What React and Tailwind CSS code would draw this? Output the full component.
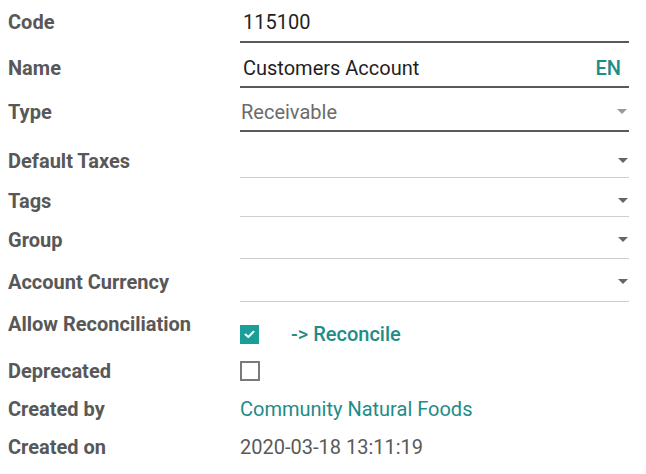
import React from "react";

const font = { fontFamily: "Roboto, 'Open Sans', sans-serif" };

function Caret({ light }) {
  return (
    <svg width="10" height="6" viewBox="0 0 10 6" className="shrink-0">
      <path d="M0 0 L10 0 L5 5 Z" fill={light ? "#9a9a9a" : "#666666"} />
    </svg>
  );
}

function Label({ children, pt }) {
  return (
    <div className={`w-[240px] shrink-0 pl-[8px] font-bold text-[20px] leading-[24px] text-[#585858] ${pt}`}>
      {children}
    </div>
  );
}

export default function App() {
  return (
    <div className="w-[646px] h-[474px] bg-white overflow-hidden" style={font}>
      {/* Code */}
      <div className="flex h-[44px]">
        <Label pt="pt-[10px]">Code</Label>
        <div className="w-[389px] pt-[10px] pb-[7px] border-b-2 border-[#5a5a5a] h-[43px]">
          <div className="pl-[3px] text-[20px] leading-[24px] text-[#1f1f1f]">115100</div>
        </div>
      </div>
      {/* Name */}
      <div className="flex h-[45px]">
        <Label pt="pt-[12px]">Name</Label>
        <div className="w-[389px] pt-[12px] pb-[6px] border-b-2 border-[#5a5a5a] h-[44px] flex justify-between">
          <div className="pl-[3px] text-[20px] leading-[24px] text-[#1f1f1f]">Customers Account</div>
          <div className="pr-[8px] text-[20px] leading-[24px] font-medium text-[#1e8c87]">EN</div>
        </div>
      </div>
      {/* Type */}
      <div className="flex h-[44px]">
        <Label pt="pt-[11px]">Type</Label>
        <div className="w-[389px] pt-[11px] pb-[6px] border-b-2 border-[#5a5a5a] h-[43px] flex justify-between items-center">
          <div className="pl-[1px] text-[20px] leading-[24px] text-[#6b6b6b]">Receivable</div>
          <div className="pr-[2px]"><Caret light /></div>
        </div>
      </div>
      {/* Default Taxes */}
      <div className="flex h-[45px]">
        <Label pt="pt-[16px]">Default Taxes</Label>
        <div className="w-[389px] pt-[16px] pb-[4px] border-b border-[#cfcfcf] h-[45px] flex justify-end items-center">
          <div className="pr-[1px]"><Caret /></div>
        </div>
      </div>
      {/* Tags */}
      <div className="flex h-[39px]">
        <Label pt="pt-[11px]">Tags</Label>
        <div className="w-[389px] pt-[11px] pb-[3px] border-b border-[#cfcfcf] h-[39px] flex justify-end items-center">
          <div className="pr-[1px]"><Caret /></div>
        </div>
      </div>
      {/* Group */}
      <div className="flex h-[42px]">
        <Label pt="pt-[11px]">Group</Label>
        <div className="w-[389px] pt-[11px] pb-[6px] border-b border-[#cfcfcf] h-[42px] flex justify-end items-center">
          <div className="pr-[1px]"><Caret /></div>
        </div>
      </div>
      {/* Account Currency */}
      <div className="flex h-[43px]">
        <Label pt="pt-[11px]">Account Currency</Label>
        <div className="w-[389px] pt-[11px] pb-[7px] border-b border-[#cfcfcf] h-[43px] flex justify-end items-center">
          <div className="pr-[1px]"><Caret /></div>
        </div>
      </div>
      {/* Allow Reconciliation */}
      <div className="flex h-[48px]">
        <Label pt="pt-[10px]">Allow Reconciliation</Label>
        <div className="flex items-center gap-[32px] pt-[20px] h-[24px] box-content">
          <div className="w-[19px] h-[19px] bg-[#1a9e98] flex items-center justify-center">
            <svg width="11" height="9" viewBox="0 0 11 9">
              <path d="M1.5 4.5 L4.3 7 L9.5 1.8" stroke="white" strokeWidth="2" fill="none" strokeLinecap="round" strokeLinejoin="round" />
            </svg>
          </div>
          <div className="text-[20px] leading-[24px] font-medium text-[#1e8c87]">-&gt; Reconcile</div>
        </div>
      </div>
      {/* Deprecated */}
      <div className="flex h-[40px]">
        <Label pt="pt-[9px]">Deprecated</Label>
        <div className="pt-[11px]">
          <div className="w-[20px] h-[20px] border-2 border-[#7a7a7a] bg-white" />
        </div>
      </div>
      {/* Created by */}
      <div className="flex h-[38px]">
        <Label pt="pt-[7px]">Created by</Label>
        <div className="pt-[7px] text-[20px] leading-[24px] text-[#1e8c87]">Community Natural Foods</div>
      </div>
      {/* Created on */}
      <div className="flex h-[46px]">
        <Label pt="pt-[7px]">Created on</Label>
        <div className="pt-[7px] text-[20px] leading-[24px] text-[#5a5a5a]">2020-03-18 13:11:19</div>
      </div>
    </div>
  );
}
